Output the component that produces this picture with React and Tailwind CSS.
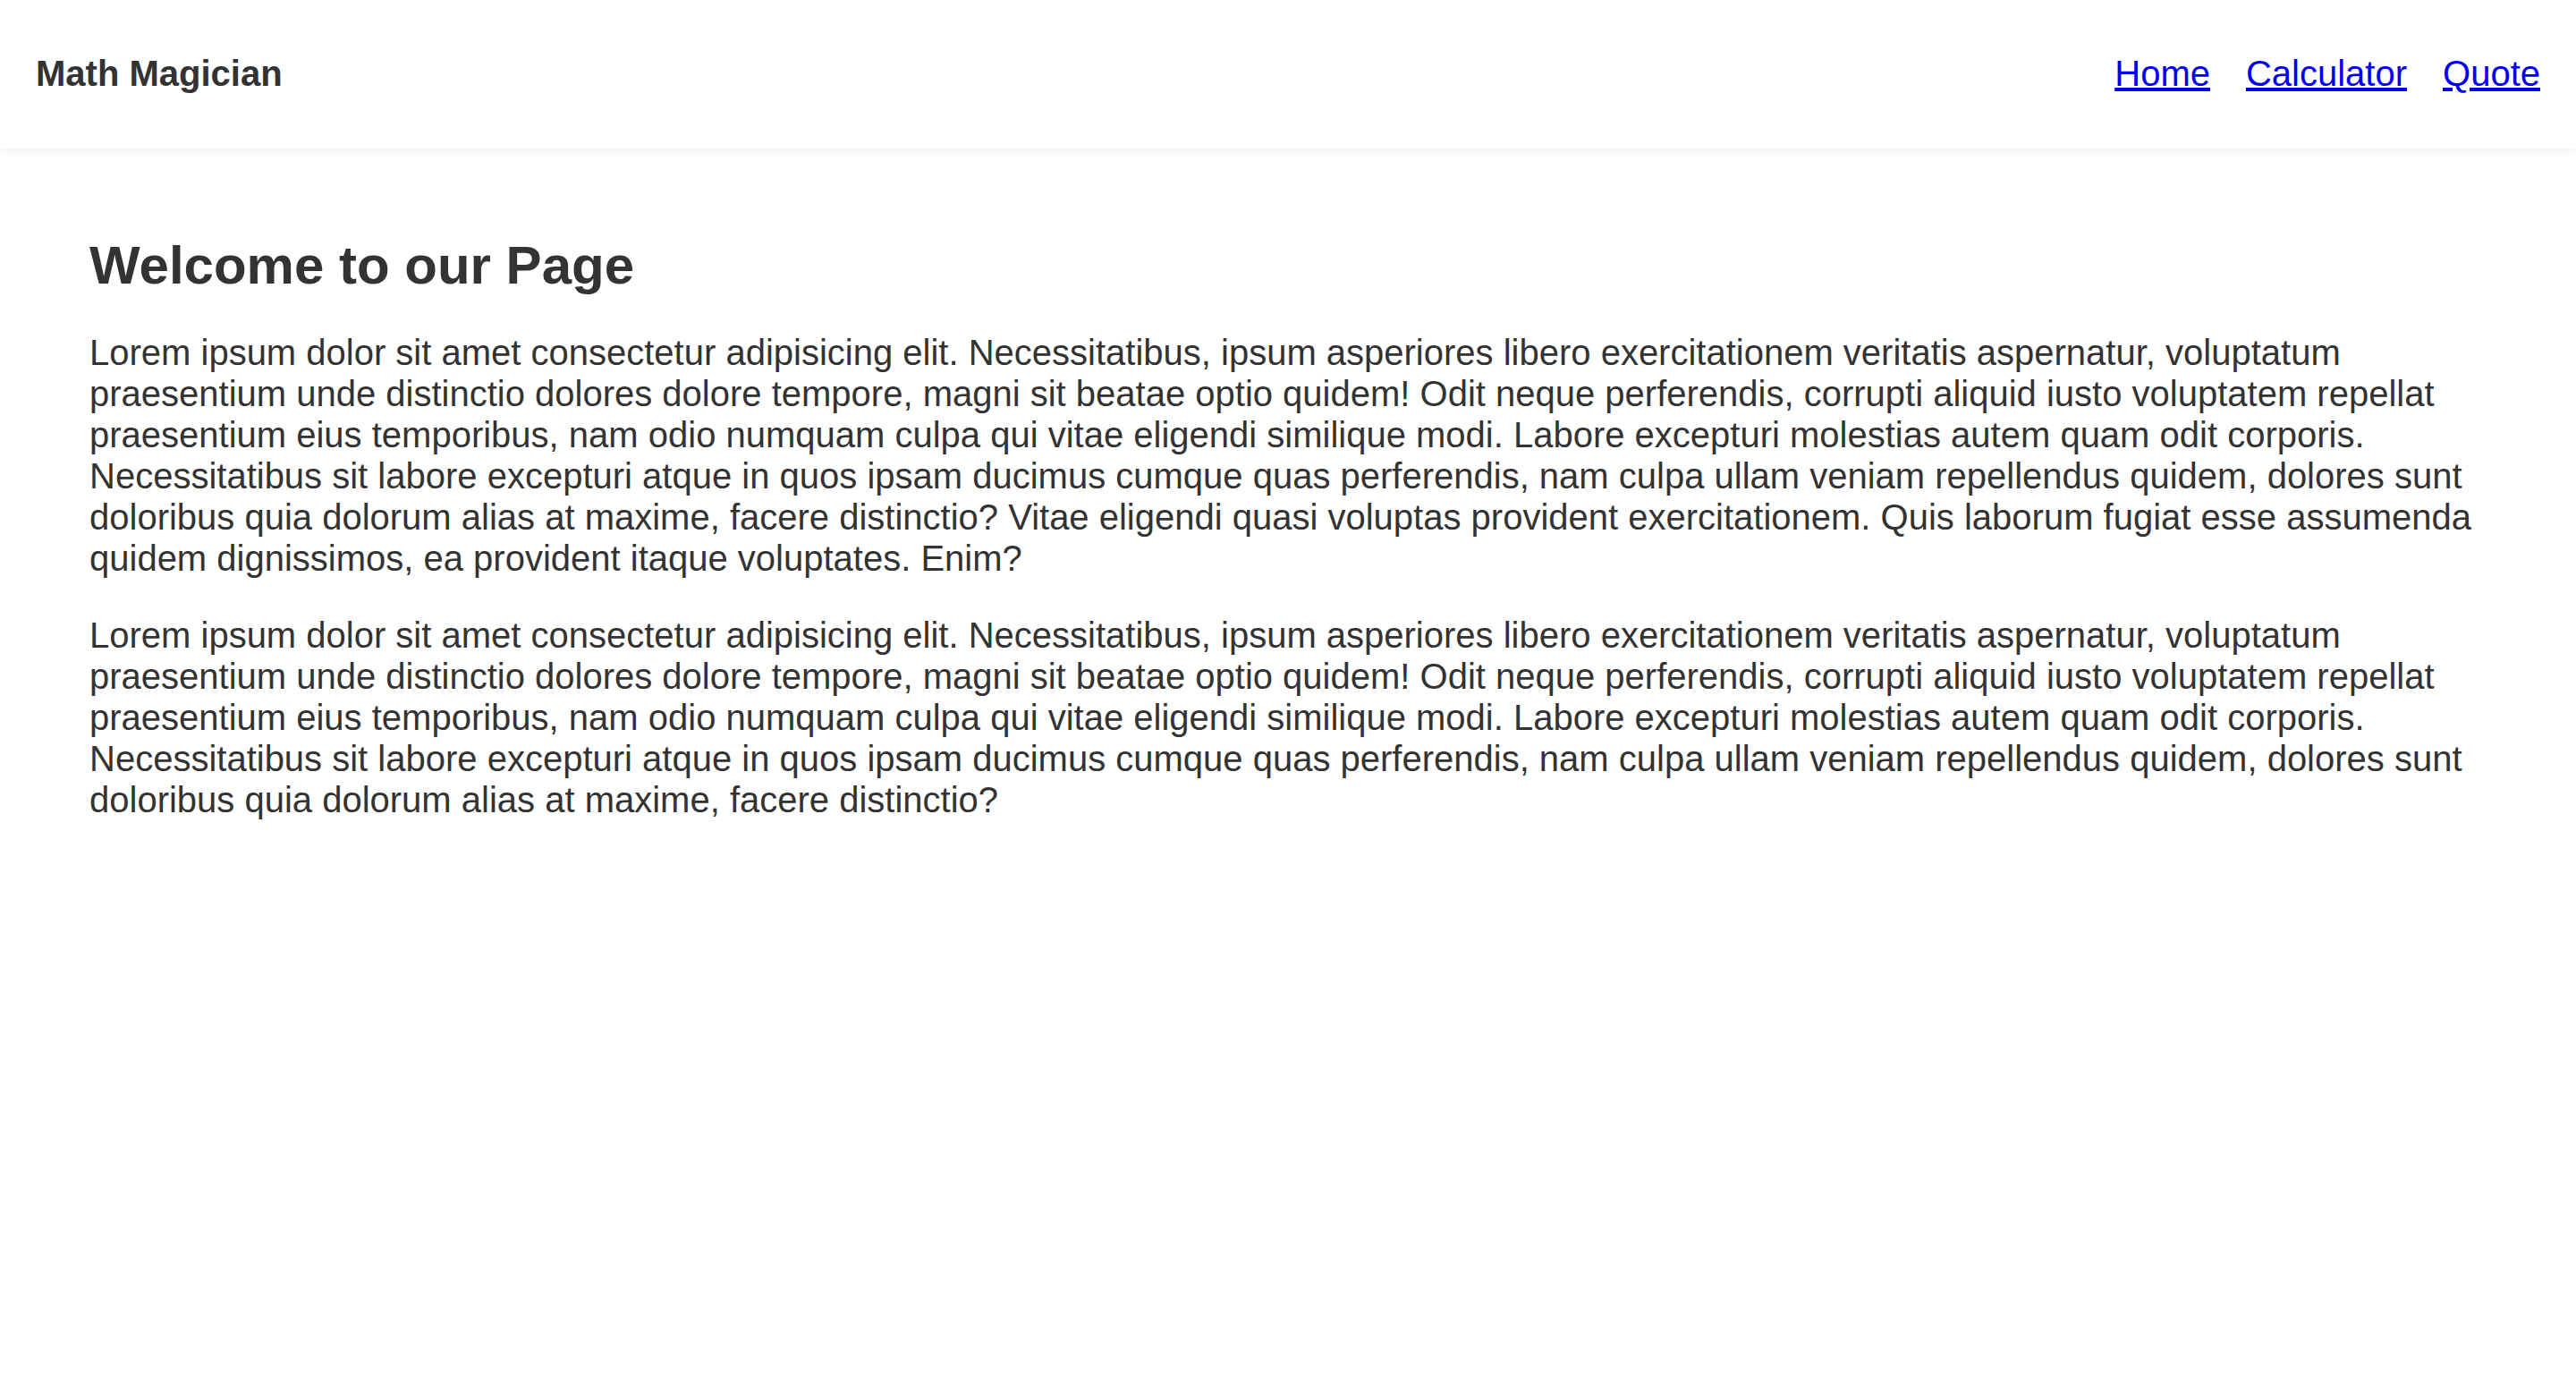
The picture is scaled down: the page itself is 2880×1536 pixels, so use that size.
import React from 'react';

const paragraphOne =
  'Lorem ipsum dolor sit amet consectetur adipisicing elit. Necessitatibus, ipsum asperiores libero exercitationem veritatis aspernatur, voluptatum praesentium unde distinctio dolores dolore tempore, magni sit beatae optio quidem! Odit neque perferendis, corrupti aliquid iusto voluptatem repellat praesentium eius temporibus, nam odio numquam culpa qui vitae eligendi similique modi. Labore excepturi molestias autem quam odit corporis. Necessitatibus sit labore excepturi atque in quos ipsam ducimus cumque quas perferendis, nam culpa ullam veniam repellendus quidem, dolores sunt doloribus quia dolorum alias at maxime, facere distinctio? Vitae eligendi quasi voluptas provident exercitationem. Quis laborum fugiat esse assumenda quidem dignissimos, ea provident itaque voluptates. Enim?';

const paragraphTwo =
  'Lorem ipsum dolor sit amet consectetur adipisicing elit. Necessitatibus, ipsum asperiores libero exercitationem veritatis aspernatur, voluptatum praesentium unde distinctio dolores dolore tempore, magni sit beatae optio quidem! Odit neque perferendis, corrupti aliquid iusto voluptatem repellat praesentium eius temporibus, nam odio numquam culpa qui vitae eligendi similique modi. Labore excepturi molestias autem quam odit corporis. Necessitatibus sit labore excepturi atque in quos ipsam ducimus cumque quas perferendis, nam culpa ullam veniam repellendus quidem, dolores sunt doloribus quia dolorum alias at maxime, facere distinctio?';

const App = () => {
  return (
    <div className="min-h-screen bg-white text-[#333] leading-[normal] font-['Liberation_Sans',Arial,sans-serif]">
      {/* NAVBAR */}
      <header className="h-[166px] flex items-center justify-between px-10 pb-[3px] bg-white shadow-[0_3px_10px_rgba(0,0,0,0.06)]">
        <h2 className="text-[40px] font-bold leading-[46px]">Math Magician</h2>
        <nav className="flex gap-10 text-[40px] leading-[46px]">
          <a href="#" className="text-[#0000ee] underline">Home</a>
          <a href="#" className="text-[#0000ee] underline">Calculator</a>
          <a href="#" className="text-[#0000ee] underline">Quote</a>
        </nav>
      </header>

      {/* CONTENT */}
      <main className="px-[100px] pt-[96px]">
        <h1 className="text-[60px] font-bold leading-[69px]">Welcome to our Page</h1>
        <p className="mt-10 text-[40px] leading-[46px]">{paragraphOne}</p>
        <p className="mt-10 text-[40px] leading-[46px]">{paragraphTwo}</p>
      </main>
    </div>
  );
};

export default App;
